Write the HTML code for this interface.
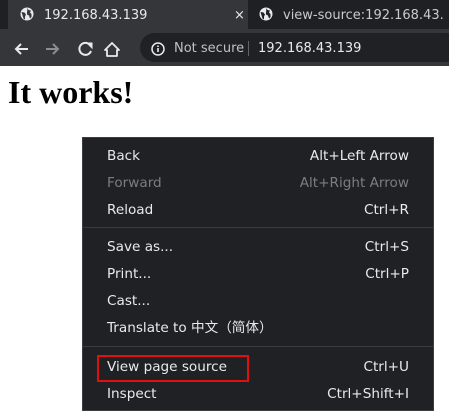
<!DOCTYPE html>
<html><head><meta charset="utf-8"><style>
*{margin:0;padding:0;box-sizing:border-box}
body{width:449px;height:418px;overflow:hidden;background:#fff;position:relative;font-family:"DejaVu Sans","Liberation Sans",sans-serif}
.tabs{position:absolute;left:0;top:0;width:449px;height:30px;background:#1f2024}
.tab{position:absolute;top:0;height:30px;font-size:13px;color:#e8eaed;line-height:26px}
.t1{left:8px;width:240px;background:#35363a}
.toolbar{position:absolute;left:0;top:29px;width:449px;height:37px;background:#35363a}
.omni{position:absolute;left:140px;top:4px;width:320px;height:29px;background:#202124;border-radius:15px;font-size:13px;line-height:31px;color:#9aa0a6}
h1{position:absolute;left:8px;top:74px;font:bold 32px "Liberation Serif",serif;color:#000}
.menu{position:absolute;left:82px;top:137px;width:352px;height:274px;background:#202124;border:1px solid #3c3d40;font-size:13.6px;color:#e8eaed}
.it{position:absolute;left:24px;right:24px;height:27px;line-height:29px}
.it span{position:absolute;right:0;top:0}
.dis{color:#7a7d82}
.sep{position:absolute;left:0;right:0;height:1px;background:#3a3b3e}
.red{position:absolute;left:14px;top:217px;width:152px;height:27px;border:2px solid #e01010}
</style></head><body>
<div class="tabs">
<div class="tab t1"><svg style="position:absolute;left:12px;top:7px" width="14" height="14" viewBox="0 0 14 14"><circle cx="7" cy="7" r="6.5" fill="#e8eaed"/><path d="M1.5 5l3 0.5 1.5 2-1 2 0 3-1.5-1zM7.5 1l1 2 2.5 0.5-1 2 1.5 1.5 0 3-1.5 1.5-1-3-2-1 0-2z" fill="#35363a"/></svg><span style="position:absolute;left:36px;top:3px">192.168.43.139</span><span style="position:absolute;left:226px;top:3px">×</span></div>
<div class="tab" style="left:249px;width:200px"><svg style="position:absolute;left:10px;top:7px" width="14" height="14" viewBox="0 0 14 14"><circle cx="7" cy="7" r="6.5" fill="#e8eaed"/><path d="M1.5 5l3 0.5 1.5 2-1 2 0 3-1.5-1zM7.5 1l1 2 2.5 0.5-1 2 1.5 1.5 0 3-1.5 1.5-1-3-2-1 0-2z" fill="#1f2024"/></svg><span style="position:absolute;left:34px;top:3px;color:#c8cacd">view-source:192.168.43.</span></div>
</div>
<div class="toolbar">
<svg style="position:absolute;left:12px;top:11px" width="110" height="18" viewBox="0 0 110 18" fill="none" stroke-width="2"><path d="M16 9H4M9 4L4 9l5 5" stroke="#e8eaed"/><path d="M34 9h12M41 4l5 5-5 5" stroke="#8a8d91"/><path d="M78 5a6 6 0 1 0 1 6" stroke="#e8eaed"/><path d="M75 3h5v5z" fill="#e8eaed" stroke="#e8eaed" stroke-width="1"/><path d="M100 3l-7 7h2v6h10v-6h2z" stroke="#e8eaed" stroke-width="1.8" stroke-linejoin="round"/></svg>
<div class="omni"><svg style="position:absolute;left:11px;top:9px" width="14" height="14" viewBox="0 0 14 14"><circle cx="7" cy="7" r="6" fill="none" stroke="#e8eaed" stroke-width="1.5"/><path d="M7 6v4M7 3.5v1.5" stroke="#e8eaed" stroke-width="1.6"/></svg><span style="position:absolute;left:34px;color:#bdc1c6">Not secure</span><span style="position:absolute;left:108px;top:8px;width:1px;height:15px;background:#5f6368"></span><span style="position:absolute;left:118px;color:#e8eaed">192.168.43.139</span></div>
</div>
<h1>It works!</h1>
<div class="menu">
<div class="it" style="top:4px">Back<span>Alt+Left Arrow</span></div>
<div class="it dis" style="top:31px">Forward<span>Alt+Right Arrow</span></div>
<div class="it" style="top:58px">Reload<span>Ctrl+R</span></div>
<div class="sep" style="top:89px"></div>
<div class="it" style="top:95px">Save as...<span>Ctrl+S</span></div>
<div class="it" style="top:122px">Print...<span>Ctrl+P</span></div>
<div class="it" style="top:149px">Cast...</div>
<div class="it" style="top:176px;font-family:'DejaVu Sans','Noto Sans CJK SC',sans-serif">Translate to 中文（简体）</div>
<div class="sep" style="top:208px"></div>
<div class="it" style="top:215px">View page source<span>Ctrl+U</span></div>
<div class="it" style="top:242px">Inspect<span>Ctrl+Shift+I</span></div>
<div class="red"></div>
</div>
</body></html>
